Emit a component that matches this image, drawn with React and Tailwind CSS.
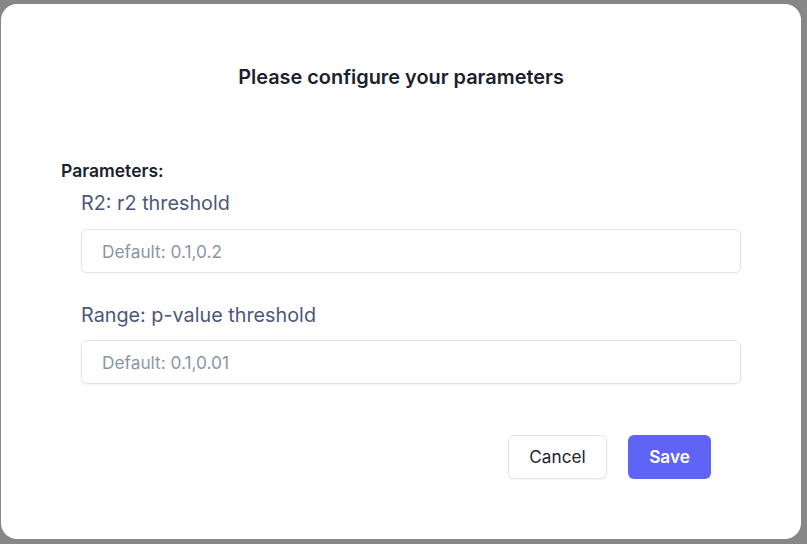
import React, { useState } from "react";

function ParamField({ label, placeholder, value, onChange, tight }) {
  return (
    <div className="flex flex-col">
      <label className="text-[19.8px] leading-[28px] text-[#4c5878]">{label}</label>
      <input
        type="text"
        value={value}
        onChange={(e) => onChange(e.target.value)}
        placeholder={placeholder}
        className={
          (tight ? "mt-[11px] " : "mt-3 ") +
          "h-[44px] w-[660px] rounded-md border border-[#e4e4ee] bg-white px-5 text-[17.3px] text-[#1e2232] shadow-[0_1px_2px_rgba(0,0,0,0.05)] outline-none placeholder:text-[#8b95a9]"
        }
      />
    </div>
  );
}

export default function App() {
  const [r2, setR2] = useState("");
  const [range, setRange] = useState("");

  return (
    <div
      className="h-[544px] w-full overflow-hidden bg-[#878787] pl-[1px] pt-[4px]"
      style={{ fontFamily: "Inter, 'Noto Sans', sans-serif" }}
    >
      <div className="flex h-[535px] w-[800px] flex-col rounded-2xl bg-white pt-[59px]">
        <h1 className="text-center text-[19.9px] font-semibold leading-[28px] text-[#1c1f2e]">
          Please configure your parameters
        </h1>

        <div className="mt-[68px] pl-[60px]">
          <p className="text-[17.5px] font-semibold leading-[24px] text-[#1c1f2e]">Parameters:</p>
          <div className="mt-[6px] flex flex-col gap-[28px] pl-[20px]">
            <ParamField label="R2: r2 threshold" placeholder="Default: 0.1,0.2" value={r2} onChange={setR2} />
            <ParamField
              label="Range: p-value threshold"
              placeholder="Default: 0.1,0.01"
              value={range}
              onChange={setRange}
              tight
            />
          </div>
        </div>

        <div className="mt-[51px] flex justify-end gap-[21px] pr-[90px]">
          <button className="h-[44px] w-[99px] rounded-md border border-[#e4e4ee] bg-white text-[17.2px] text-[#1c1f2e] shadow-[0_1px_2px_rgba(0,0,0,0.05)]">
            Cancel
          </button>
          <button className="h-[44px] w-[83px] rounded-md bg-[#5f63f6] text-[17.2px] font-semibold text-white">
            Save
          </button>
        </div>
      </div>
    </div>
  );
}
